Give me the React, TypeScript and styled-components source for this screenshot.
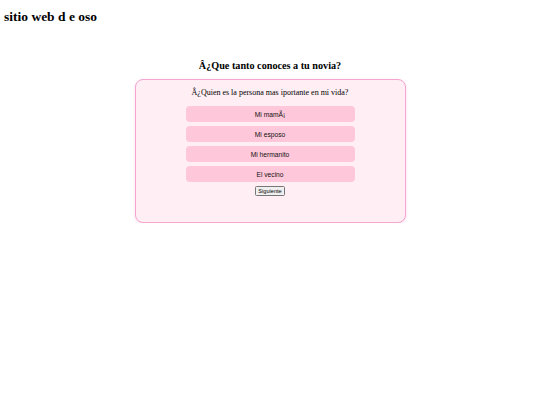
import { styled, createGlobalStyle } from "styled-components";

const GlobalStyle = createGlobalStyle`
  html, body {
    margin: 0;
    background: #ffffff;
  }
  body {
    font-family: "Liberation Serif", "Times New Roman", serif;
    color: #000;
  }
`;

const options = ["Mi mamÃ¡", "Mi esposo", "Mi hermanito", "El vecino"];

const App = () => {
  return (
    <>
      <GlobalStyle />
      <Page>
        <SiteTitle>sitio web d e oso</SiteTitle>
        <QuizTitle>Â¿Que tanto conoces a tu novia?</QuizTitle>
        <QuizCard>
          <Question>Â¿Quien es la persona mas iportante en mi vida?</Question>
          <OptionList>
            {options.map((o) => (
              <OptionButton key={o}>{o}</OptionButton>
            ))}
          </OptionList>
          <NextButton>Siguiente</NextButton>
        </QuizCard>
      </Page>
    </>
  );
};

export default App;

const Page = styled.div`
  padding: 0 4px;
`;

const SiteTitle = styled.h1`
  margin: 0;
  padding-top: 8.5px;
  font-size: 13.5px;
  line-height: 16px;
  font-weight: bold;
`;

const QuizTitle = styled.h2`
  margin: 34.5px 0 0;
  text-align: center;
  font-size: 10.2px;
  line-height: 13px;
  font-weight: bold;
`;

const QuizCard = styled.div`
  box-sizing: border-box;
  width: 271px;
  height: 144px;
  margin: 7px auto 0;
  padding: 8px;
  background: #ffeef4;
  border: 1px solid #f5a6d0;
  border-radius: 8px;
  box-shadow: 0 1px 3px rgba(240, 150, 200, 0.35);
  display: flex;
  flex-direction: column;
  align-items: center;
`;

const Question = styled.p`
  margin: 0;
  font-size: 8px;
  line-height: 10px;
  text-align: center;
`;

const OptionList = styled.div`
  margin-top: 8px;
  display: flex;
  flex-direction: column;
  row-gap: 4px;
  width: 169px;
`;

const OptionButton = styled.div`
  height: 16px;
  display: flex;
  align-items: center;
  justify-content: center;
  background: #ffc8da;
  border-radius: 4px;
  font-family: "Liberation Sans", Arial, sans-serif;
  font-size: 6.7px;
  color: #111;
  cursor: pointer;
`;

const NextButton = styled.button`
  margin-top: 4px;
  padding: 0.5px 2.5px;
  background: #efefef;
  border: 1px solid #767676;
  border-radius: 1.5px;
  font-family: "Liberation Sans", Arial, sans-serif;
  font-size: 5.6px;
  line-height: 6.5px;
  color: #000;
`;
